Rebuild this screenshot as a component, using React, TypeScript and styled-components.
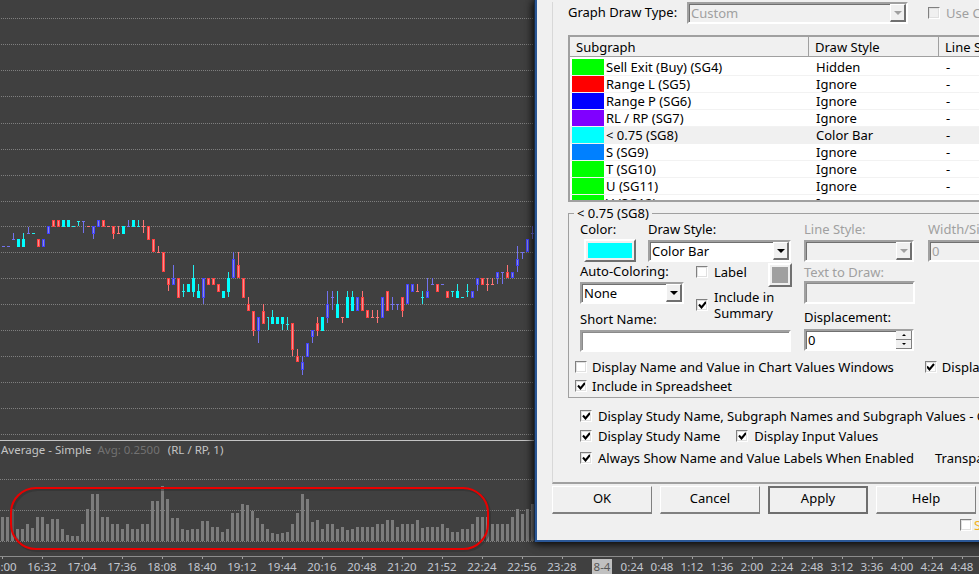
import React from "react";
import styled, { createGlobalStyle } from "styled-components";

const UI_FONT = `"Noto Sans", "Open Sans", sans-serif`;

const Global = createGlobalStyle`
  html, body { margin: 0; padding: 0; background: #404040; overflow: hidden; }
  * { box-sizing: border-box; }
`;

type Kind = "c" | "b" | "r";
type Candle = [Kind, number, number, number, number];

const CANDLES: Candle[] = [
  ["b",172,172,172,172],["b",172,172,172,172],["b",132,151,151,151],["c",150,150,174,174],["c",132,150,174,174],
  ["b",113,133,133,133],["c",133,133,133,133],["r",151,151,173,173],["b",151,151,173,173],["b",112,112,134,134],
  ["r",94,94,113,113],["r",94,94,113,113],["c",94,94,113,113],["c",94,94,113,113],["c",112,112,112,112],
  ["c",95,95,95,112],["b",95,95,95,131],["r",112,112,112,112],["b",112,112,134,150],["b",94,94,113,113],
  ["r",94,94,113,113],["r",112,112,112,112],["r",112,112,134,150],["r",112,133,133,133],["c",112,112,134,134],
  ["b",94,112,112,112],["c",94,94,113,113],["c",94,112,112,112],["r",94,112,112,131],["r",112,112,152,152],
  ["r",151,151,190,190],["r",171,190,190,190],["r",190,190,250,250],["r",268,268,287,305],["b",228,268,287,287],
  ["r",268,268,326,326],["c",286,307,307,324],["c",286,286,308,308],["c",228,268,308,324],["c",286,307,326,326],
  ["b",268,268,326,346],["r",268,268,287,287],["r",268,268,287,287],["r",286,286,308,308],["c",307,307,326,326],
  ["c",250,268,308,324],["b",190,211,268,268],["r",190,229,268,268],["r",268,268,326,326],["r",325,346,365,365],
  ["r",365,365,425,440],["b",385,385,425,461],["r",346,365,404,404],["c",385,385,385,423],["c",364,385,404,404],
  ["c",385,385,404,404],["c",385,385,404,423],["c",385,404,404,423],["r",403,403,482,501],["r",481,502,520,520],
  ["b",502,520,542,557],["b",463,463,503,503],["b",424,424,443,461],["r",385,403,425,440],["c",385,385,425,425],
  ["b",307,346,386,401],["b",307,325,325,362],["c",307,346,386,386],["r",385,385,385,401],["c",307,325,386,386],
  ["c",307,325,365,365],["b",325,325,365,365],["r",307,325,365,365],["r",364,364,386,386],["r",364,385,385,385],
  ["r",364,385,385,401],["b",325,325,386,386],["r",307,307,365,365],["b",325,346,346,362],["b",346,346,346,362],
  ["r",325,325,365,383],["b",286,286,346,346],["b",286,286,308,308],["r",286,307,307,307],["c",307,325,325,346],
  ["b",268,307,326,326],["b",268,286,286,286],["r",286,286,308,308],["b",286,286,286,286],["r",307,307,326,326],
  ["c",307,307,307,324],["c",286,307,326,326],["c",325,325,325,325],["c",286,307,307,324],["b",307,307,326,326],
  ["b",268,268,287,305],["r",268,268,287,287],["r",268,286,286,305],["r",268,286,286,286],["b",250,250,268,285],
  ["b",250,250,250,285],["r",228,250,268,268],["b",250,250,268,268],["b",171,211,230,248],["b",190,190,190,209],
  ["b",151,151,190,190],["b",112,133,133,150],
];

const VOLUME: number[] = [
  261,261,237,297,297,282,294,261,261,282,267,267,297,316,319,319,282,237,192,192,261,261,282,282,297,282,297,297,282,282,
  213,213,168,207,264,264,297,300,297,297,273,273,291,291,306,297,249,249,222,225,243,264,282,297,
  309,312,309,306,282,249,192,207,276,270,297,282,282,297,291,300,297,291,291,291,291,282,282,270,270,291,282,282,282,270,
  294,291,291,291,282,294,306,306,297,297,282,261,261,261,282,282,282,282,261,237,252,237,222,
];

const BODY: Record<Kind, string> = { c: "#00ffff", b: "#4040ff", r: "#ff4040" };
const WICK: Record<Kind, string> = { c: "#22eeee", b: "#7272ee", r: "#ff7474" };
const INNER: Record<Kind, string> = { c: "#00ffff", b: "#8f8fd0", r: "#f09090" };

const PRICE_LINES = [18, 44, 70, 96, 123, 149, 175, 201, 227, 253, 279, 305, 331, 357, 383, 409, 435];
const STUDY_LINES = [19, 50, 81];

const py = (v: number) => Math.round(190 + v / 3);

const PriceChart = () => (
  <PriceSvg width={979} height={441} viewBox="0 0 979 441" shapeRendering="crispEdges">
    {PRICE_LINES.map((y) => (
      <line key={y} x1={0} x2={979} y1={y + 0.5} y2={y + 0.5} stroke="#808080" strokeDasharray="1 1" />
    ))}
    {CANDLES.map(([k, hi, top, bot, lo], i) => {
      const x = 5 * i + 1;
      const t = py(top);
      const b = py(bot);
      return (
        <g key={i}>
          <rect x={x + 1} y={py(hi)} width={1} height={Math.max(py(lo) - py(hi), 1)} fill={WICK[k]} />
          {b - t < 2 ? (
            <rect x={x} y={t} width={3} height={1} fill={WICK[k]} />
          ) : (
            <>
              <rect x={x} y={t} width={3} height={b - t} fill={BODY[k]} />
              <rect x={x + 1} y={t + 1} width={1} height={b - t - 2} fill={INNER[k]} />
            </>
          )}
        </g>
      );
    })}
  </PriceSvg>
);

const StudyChart = () => (
  <StudySvg width={979} height={96} viewBox="0 0 979 96">
    <g shapeRendering="crispEdges">
      {VOLUME.map((v, i) => {
        const top = Math.round(430 + v / 3) - 460;
        return <rect key={i} x={5 * i + 1} y={top} width={3} height={81 - top} fill="#7c7c7c" />;
      })}
      {STUDY_LINES.map((y) => (
        <line key={y} x1={0} x2={979} y1={y + 0.5} y2={y + 0.5} stroke="#808080" strokeDasharray="1 1" />
      ))}
    </g>
    <rect x={11} y={28} width={477} height={61} rx={25} fill="none" stroke="#2c2c2c" strokeOpacity={0.45} strokeWidth={3} transform="translate(1.5 1.5)" />
    <rect x={11} y={28} width={477} height={61} rx={25} fill="none" stroke="#e80000" strokeWidth={2} />
  </StudySvg>
);

const TIMES: [string, number, boolean?][] = [
  ["16:00", 40],["16:32", 40],["17:04", 40],["17:36", 40],["18:08", 40],["18:40", 40],["19:12", 40],["19:44", 40],
  ["20:16", 40],["20:48", 40],["21:20", 40],["21:52", 40],["22:24", 40],["22:56", 40],["23:28", 40],["8-4", 35, true],
  ["0:24", 30],["0:48", 30],["1:12", 30],["1:36", 30],["2:00", 30],["2:24", 30],["2:48", 30],["3:12", 30],["3:36", 30],
  ["4:00", 30],["4:24", 30],["4:48", 30],
];

const ROWS: [string, string, string, boolean?][] = [
  ["#00ff00", "Sell Exit (Buy) (SG4)", "Hidden"],
  ["#ff0000", "Range L (SG5)", "Ignore"],
  ["#0000ff", "Range P (SG6)", "Ignore"],
  ["#8000ff", "RL / RP (SG7)", "Ignore"],
  ["#00ffff", "< 0.75 (SG8)", "Color Bar", true],
  ["#0080ff", "S (SG9)", "Ignore"],
  ["#00ff00", "T (SG10)", "Ignore"],
  ["#00ff00", "U (SG11)", "Ignore"],
  ["#00ff00", "V (SG12)", "Ignore"],
];

const Check = ({ on, off }: { on?: boolean; off?: boolean }) => (
  <CheckBox $disabled={off}>
    {on && (
      <svg width="9" height="8" viewBox="0 0 9 8">
        <path d="M1 3.5 L3.5 6.5 L8 1" fill="none" stroke="#000" strokeWidth="2" />
      </svg>
    )}
  </CheckBox>
);

const Combo = ({ text, w, off }: { text?: string; w: number; off?: boolean }) => (
  <ComboBox $w={w} $off={off}>
    <ComboText $off={off}>{text}</ComboText>
    <ArrowButton>
      <Arrow $off={off} />
    </ArrowButton>
  </ComboBox>
);

const Spinner = ({ w, off }: { w: number; off?: boolean }) => (
  <ComboBox $w={w} $off={off}>
    <ComboText $off={off}>0</ComboText>
    <SpinColumn>
      <SpinPart><SpinUp $off={off} /></SpinPart>
      <SpinPart><SpinDown $off={off} /></SpinPart>
    </SpinColumn>
  </ComboBox>
);

export default function App() {
  return (
    <Page>
      <Global />
      <ChartColumn>
        <PriceChart />
        <StudyLabel>
          Average - Simple<AvgText>Avg: 0.2500</AvgText><ArgsText>(RL / RP, 1)</ArgsText>
        </StudyLabel>
        <StudyChart />
        <Axis>
          {TIMES.map(([t, w, hl]) => (
            <TimeCell key={t} $w={w} $pad={hl ? 5 : 0}>
              <Tick $hide={hl} />
              <TimeText $hl={hl}>{t}</TimeText>
            </TimeCell>
          ))}
        </Axis>
      </ChartColumn>

      <Dialog>
        <TabPage>
          <DrawTypeRow>
            <FieldLabel>Graph Draw Type:</FieldLabel>
            <Combo w={221} text="Custom" off />
            <UseRow>
              <Check off />
              <DisabledText>Use Cust</DisabledText>
            </UseRow>
          </DrawTypeRow>

          <ListBox>
            <ListHeader>
              <HeaderCell $w={239}>Subgraph</HeaderCell>
              <HeaderCell $w={130}>Draw Style</HeaderCell>
              <HeaderCell $w={60}>Line Style</HeaderCell>
            </ListHeader>
            {ROWS.map(([color, name, style, sel]) => (
              <ListRow key={name} $selected={sel}>
                <NameCell>
                  <Swatch $color={color} />
                  {name}
                </NameCell>
                <StyleCell>{style}</StyleCell>
                <DashCell>-</DashCell>
              </ListRow>
            ))}
          </ListBox>

          <GroupBox>
            <Legend>&lt; 0.75 (SG8)</Legend>
            <GroupColumns>
              <ColumnA>
                <SplitRow>
                  <ColorCol>
                    <FieldLabel>Color:</FieldLabel>
                    <ColorButton $w={52} $h={23}>
                      <ColorFill $color="#00ffff" />
                    </ColorButton>
                  </ColorCol>
                  <StyleCol>
                    <FieldLabel>Draw Style:</FieldLabel>
                    <Combo w={143} text="Color Bar" />
                  </StyleCol>
                </SplitRow>
                <MiddleRow>
                  <AutoCol>
                    <FieldLabel>Auto-Coloring:</FieldLabel>
                    <Combo w={104} text="None" />
                    <ShortLabel>Short Name:</ShortLabel>
                  </AutoCol>
                  <ChecksCol>
                    <CheckLine>
                      <Check />
                      <CheckText>Label</CheckText>
                    </CheckLine>
                    <SummaryLine>
                      <Check on />
                      <CheckText>Include in<br />Summary</CheckText>
                    </SummaryLine>
                  </ChecksCol>
                  <ColorButton $w={24} $h={24}>
                    <ColorFill $color="#a0a0a0" />
                  </ColorButton>
                </MiddleRow>
                <TextInput $w={211} />
              </ColumnA>
              <ColumnB>
                <DisabledLabel>Line Style:</DisabledLabel>
                <Combo w={110} off />
                <TextLabel>Text to Draw:</TextLabel>
                <TextInput $w={111} $off $h={23} />
                <DispLabel>Displacement:</DispLabel>
                <Spinner w={110} />
              </ColumnB>
              <ColumnC>
                <DisabledLabel>Width/Size:</DisabledLabel>
                <Spinner w={70} off />
              </ColumnC>
            </GroupColumns>
            <GroupChecks>
              <CheckLine>
                <Check />
                <GroupText>Display Name and Value in Chart Values Windows</GroupText>
                <FarCheck>
                  <Check on />
                  <GroupText>Display Value</GroupText>
                </FarCheck>
              </CheckLine>
              <CheckLine>
                <Check on />
                <GroupText>Include in Spreadsheet</GroupText>
              </CheckLine>
            </GroupChecks>
          </GroupBox>

          <OuterChecks>
            <OuterLine $h={20}>
              <Check on />
              <LongText>Display Study Name, Subgraph Names and Subgraph Values - Global</LongText>
            </OuterLine>
            <OuterLine $h={20}>
              <Check on />
              <LongText>Display Study Name</LongText>
              <InputValues>
                <Check on />
                <LongText>Display Input Values</LongText>
              </InputValues>
            </OuterLine>
            <OuterLine $h={24}>
              <Check on />
              <LongText>Always Show Name and Value Labels When Enabled</LongText>
              <Transparency>Transparency</Transparency>
            </OuterLine>
          </OuterChecks>
        </TabPage>

        <ButtonRow>
          <DialogButton>OK</DialogButton>
          <DialogButton>Cancel</DialogButton>
          <DialogButton $primary>Apply</DialogButton>
          <DialogButton>Help</DialogButton>
        </ButtonRow>
        <FootRow>
          <Check />
          <FootText>Save</FootText>
        </FootRow>
      </Dialog>
    </Page>
  );
}

const Page = styled.div`
  position: relative;
  width: 979px;
  height: 574px;
  overflow: hidden;
  background: #404040;
  font-family: ${UI_FONT};
`;

const ChartColumn = styled.div`
  display: flex;
  flex-direction: column;
  width: 979px;
  height: 574px;
`;

const PriceSvg = styled.svg`
  display: block;
  flex: none;
  border-bottom: 1px solid #c4c4c4;
`;

const StudySvg = styled.svg`
  display: block;
  flex: none;
`;

const StudyLabel = styled.div`
  flex: none;
  height: 19px;
  padding: 0 0 2px 1px;
  display: flex;
  align-items: center;
  font-size: 11.5px;
  color: #c4c4c4;
  white-space: nowrap;
`;

const AvgText = styled.span`
  margin-left: 6px;
  color: #727272;
`;

const ArgsText = styled.span`
  margin-left: 8px;
`;

const Axis = styled.div`
  flex: none;
  height: 18px;
  margin-left: -18px;
  display: flex;
  width: 1020px;
  border-top: 1px solid #8c8c8c;
`;

const TimeCell = styled.div<{ $w: number; $pad: number }>`
  flex: none;
  width: ${(p) => p.$w}px;
  padding-left: ${(p) => p.$pad}px;
  display: flex;
  flex-direction: column;
  align-items: center;
`;

const Tick = styled.div<{ $hide?: boolean }>`
  width: 1px;
  height: 4px;
  background: ${(p) => (p.$hide ? "transparent" : "#a0a0a0")};
`;

const TimeText = styled.div<{ $hl?: boolean }>`
  font-size: 11.5px;
  line-height: 15px;
  color: ${(p) => (p.$hl ? "#555555" : "#c4c8d0")};
  background: ${(p) => (p.$hl ? "#c0c0c0" : "transparent")};
  padding: 0 ${(p) => (p.$hl ? 2 : 0)}px;
  white-space: nowrap;
`;

const Dialog = styled.div`
  position: absolute;
  left: 535px;
  top: 0;
  width: 460px;
  height: 542px;
  background: #f0f0f0;
  border-left: 2px solid #2a5796;
  border-bottom: 2px solid #2a5796;
  box-shadow: -1px 0 0 #1a2a40, 0 2px 8px rgba(0, 0, 0, 0.7), -3px 0 8px rgba(0, 0, 0, 0.6);
  padding-left: 15px;
  font-size: 13px;
  color: #000;
`;

const TabPage = styled.div`
  width: 445px;
  height: 482px;
  border-left: 1px solid #d8d8d8;
  border-bottom: 2px solid #a0a0a0;
  padding-left: 15px;
`;

const DrawTypeRow = styled.div`
  display: flex;
  align-items: center;
  height: 22px;
  margin-top: 2px;
  padding-top: 2px;
`;

const FieldLabel = styled.div`
  height: 15px;
  line-height: 15px;
  white-space: nowrap;
  flex: none;
  & + div { margin-top: 3px; }
  ${DrawTypeRow} > & { width: 119px; margin-top: -3px; }
  ${DrawTypeRow} > & + div { margin-top: -2px; }
`;

const DisabledLabel = styled(FieldLabel)`
  color: #a0a0a0;
`;

const TextLabel = styled(DisabledLabel)`
  margin-top: 3px;
  & + div { margin-top: 1px; }
`;

const DispLabel = styled(FieldLabel)`
  margin-top: 6px;
  & + div { margin-top: 4px; }
`;

const ShortLabel = styled(FieldLabel)`
  margin-top: 8px;
`;

const UseRow = styled.div`
  display: flex;
  align-items: center;
  gap: 6px;
  margin: -3px 0 0 20px;
`;

const DisabledText = styled.span`
  color: #a0a0a0;
  white-space: nowrap;
`;

const ListBox = styled.div`
  width: 430px;
  height: 167px;
  margin-top: 11px;
  border: 2px solid #a0a0a0;
  border-right: none;
  background: #fff;
  overflow: hidden;
`;

const ListHeader = styled.div`
  display: flex;
  height: 20px;
  background: #f0f0f0;
  border-bottom: 1px solid #a0a0a0;
  margin-bottom: 2px;
`;

const HeaderCell = styled.div<{ $w: number }>`
  flex: none;
  width: ${(p) => p.$w}px;
  padding: 1px 0 0 6px;
  line-height: 18px;
  border-right: 1px solid #a0a0a0;
  white-space: nowrap;
`;

const ListRow = styled.div<{ $selected?: boolean }>`
  display: flex;
  align-items: center;
  height: 17px;
  line-height: 16px;
  background: ${(p) => (p.$selected ? "#f0f0f0" : "#fff")};
  border-bottom: 1px solid ${(p) => (p.$selected ? "#f0f0f0" : "#f2f2f2")};
`;

const NameCell = styled.div`
  flex: none;
  width: 240px;
  height: 16px;
  display: flex;
  align-items: center;
  padding-left: 2px;
  white-space: nowrap;
`;

const Swatch = styled.div<{ $color: string }>`
  width: 32px;
  height: 16px;
  margin-right: 2px;
  background: ${(p) => p.$color};
`;

const StyleCell = styled.div`
  flex: none;
  width: 130px;
  padding-left: 6px;
`;

const DashCell = styled.div`
  flex: none;
  width: 60px;
  padding-left: 6px;
`;

const GroupBox = styled.div`
  position: relative;
  width: 430px;
  height: 185px;
  margin-top: 11px;
  border: 1px solid #a0a0a0;
  border-right: none;
  padding: 8px 0 0 11px;
`;

const Legend = styled.div`
  position: absolute;
  left: 5px;
  top: -8px;
  padding: 0 3px;
  height: 15px;
  line-height: 15px;
  background: #f0f0f0;
  white-space: nowrap;
`;

const GroupColumns = styled.div`
  display: flex;
  gap: 12px;
  height: 130px;
`;

const ColumnA = styled.div`
  flex: none;
  width: 212px;
  display: flex;
  flex-direction: column;
`;

const ColumnB = styled.div`
  flex: none;
  width: 112px;
`;

const ColumnC = styled.div`
  flex: none;
  width: 70px;
`;

const SplitRow = styled.div`
  display: flex;
  align-items: flex-start;
`;

const MiddleRow = styled(SplitRow)`
  height: 67px;
  margin-top: 1px;
`;

const ColorCol = styled.div`
  flex: none;
  width: 68px;
  & > ${FieldLabel} + div { margin: 2px 0 0 4px; }
`;

const StyleCol = styled.div`
  flex: none;
  width: 143px;
`;

const AutoCol = styled.div`
  flex: none;
  width: 116px;
  margin-top: 1px;
`;

const ChecksCol = styled.div`
  flex: none;
  width: 72px;
  margin-top: -1px;
`;

const CheckLine = styled.div`
  display: flex;
  align-items: center;
  height: 19px;
`;

const SummaryLine = styled.div`
  display: flex;
  align-items: center;
  margin-top: 8px;
`;

const CheckText = styled.div`
  margin-left: 6px;
  line-height: 16px;
  white-space: nowrap;
`;

const LongText = styled.span`
  margin-left: 6px;
  white-space: nowrap;
`;

const GroupText = styled(LongText)`
  margin-left: 5px;
`;

const FarCheck = styled.div`
  display: flex;
  align-items: center;
  margin-left: 31px;
`;

const GroupChecks = styled.div`
  margin: 5px 0 0 -5px;
`;

const OuterChecks = styled.div`
  margin: 8px 0 0 12px;
`;

const OuterLine = styled.div<{ $h: number }>`
  display: flex;
  align-items: center;
  height: ${(p) => p.$h}px;
  white-space: nowrap;
`;

const InputValues = styled.div`
  display: flex;
  align-items: center;
  margin-left: 16px;
`;

const Transparency = styled.span`
  margin-left: 21px;
`;

const CheckBox = styled.div<{ $disabled?: boolean }>`
  flex: none;
  width: 12px;
  height: 12px;
  display: flex;
  align-items: center;
  justify-content: center;
  background: ${(p) => (p.$disabled ? "#f0f0f0" : "#fff")};
  border: 1px solid #fff;
  border-top-color: #808080;
  border-left-color: #808080;
  outline: 1px solid #e0e0e0;
  outline-offset: -2px;
`;

const ComboBox = styled.div<{ $w: number; $off?: boolean }>`
  flex: none;
  display: flex;
  align-items: stretch;
  width: ${(p) => p.$w}px;
  height: 22px;
  background: ${(p) => (p.$off ? "#f0f0f0" : "#fff")};
  border: 2px solid #a0a0a0;
  border-right-color: #fff;
  border-bottom-color: #fff;
  box-shadow: inset 1px 1px 0 #707070;
  overflow: hidden;
`;

const ComboText = styled.div<{ $off?: boolean }>`
  flex: 1;
  padding-left: 2px;
  line-height: 18px;
  color: ${(p) => (p.$off ? "#a0a0a0" : "#000")};
  white-space: nowrap;
`;

const ArrowButton = styled.div`
  flex: none;
  width: 16px;
  display: flex;
  align-items: center;
  justify-content: center;
  background: #f0f0f0;
  border-right: 2px solid #707070;
  border-bottom: 2px solid #707070;
  border-top: 1px solid #fff;
  border-left: 1px solid #fff;
`;

const Arrow = styled.div<{ $off?: boolean }>`
  width: 0;
  height: 0;
  border-left: 4px solid transparent;
  border-right: 4px solid transparent;
  border-top: 4px solid ${(p) => (p.$off ? "#a0a0a0" : "#000")};
`;

const SpinColumn = styled.div`
  flex: none;
  width: 16px;
  display: flex;
  flex-direction: column;
`;

const SpinPart = styled.div`
  flex: 1;
  display: flex;
  align-items: center;
  justify-content: center;
  background: #f0f0f0;
  border-bottom: 1px solid #808080;
  border-right: 1px solid #808080;
`;

const SpinUp = styled.div<{ $off?: boolean }>`
  width: 0;
  height: 0;
  border-left: 2px solid transparent;
  border-right: 2px solid transparent;
  border-bottom: 2px solid ${(p) => (p.$off ? "#a0a0a0" : "#000")};
`;

const SpinDown = styled.div<{ $off?: boolean }>`
  width: 0;
  height: 0;
  border-left: 2px solid transparent;
  border-right: 2px solid transparent;
  border-top: 2px solid ${(p) => (p.$off ? "#a0a0a0" : "#000")};
`;

const TextInput = styled.div<{ $w: number; $h?: number; $off?: boolean }>`
  width: ${(p) => p.$w}px;
  height: ${(p) => p.$h ?? 22}px;
  background: ${(p) => (p.$off ? "#f0f0f0" : "#fff")};
  border: 2px solid #a0a0a0;
  border-right-color: #fff;
  border-bottom-color: #fff;
  box-shadow: inset 1px 1px 0 #8a8a8a;
`;

const ColorButton = styled.div<{ $w: number; $h: number }>`
  flex: none;
  width: ${(p) => p.$w}px;
  height: ${(p) => p.$h}px;
  padding: 2px;
  background: #f0f0f0;
  border: 2px solid #fff;
  border-right-color: #707070;
  border-bottom-color: #707070;
`;

const ColorFill = styled.div<{ $color: string }>`
  width: 100%;
  height: 100%;
  background: ${(p) => p.$color};
`;

const ButtonRow = styled.div`
  display: flex;
  gap: 8px;
  margin-top: 2px;
`;

const DialogButton = styled.div<{ $primary?: boolean }>`
  flex: none;
  width: 100px;
  height: 28px;
  display: flex;
  align-items: center;
  justify-content: center;
  padding-bottom: 4px;
  background: #f0f0f0;
  border: 1px solid #fff;
  border-right: 1px solid #808080;
  border-bottom: 2px solid #808080;
  ${(p) => p.$primary && "border: 2px solid #6e6e6e;"}
`;

const FootRow = styled.div`
  display: flex;
  align-items: center;
  height: 12px;
  gap: 2px;
  margin: 5px 0 0 408px;
`;

const FootText = styled.span`
  color: #f0b020;
  white-space: nowrap;
`;
